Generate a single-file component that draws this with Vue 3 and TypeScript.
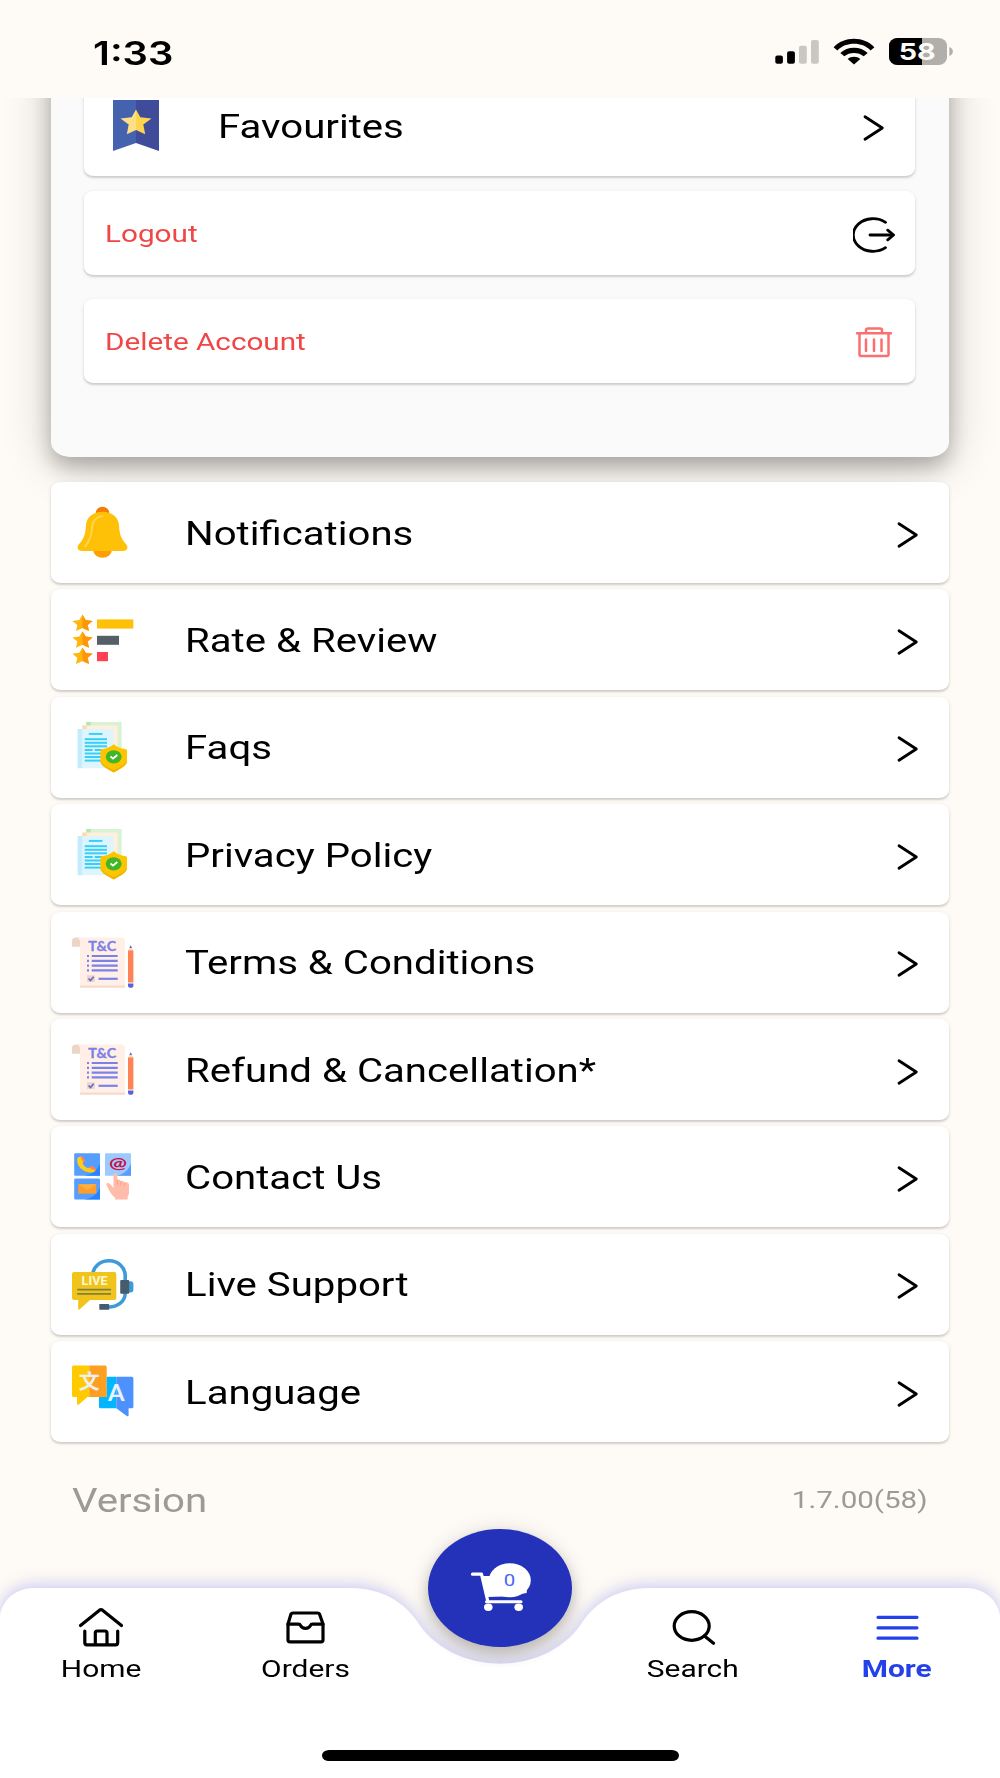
<script setup lang="ts">
type IconName = 'bell' | 'rate' | 'docs' | 'terms' | 'contact' | 'live' | 'language'

interface MenuItem {
  label: string
  icon: IconName
}

const menu: MenuItem[] = [
  { label: 'Notifications', icon: 'bell' },
  { label: 'Rate & Review', icon: 'rate' },
  { label: 'Faqs', icon: 'docs' },
  { label: 'Privacy Policy', icon: 'docs' },
  { label: 'Terms & Conditions', icon: 'terms' },
  { label: 'Refund & Cancellation*', icon: 'terms' },
  { label: 'Contact Us', icon: 'contact' },
  { label: 'Live Support', icon: 'live' },
  { label: 'Language', icon: 'language' },
]

const starOffsets: number[] = [0.6, 17.2, 33.4]
const docLines: number[] = [17.2, 20.8, 24.3, 31.5, 35, 38.6]
const termLines: number[] = [19, 23.8, 28.6, 33.4]
</script>

<template>
  <div class="screen">
    <header class="status">
      <span class="wide time">1:33</span>
      <div class="indicators">
        <svg width="45" height="25" viewBox="0 0 45 25">
          <rect x="0.3" y="15.6" width="7.6" height="8.2" rx="2" fill="#000" />
          <rect x="12.1" y="11.2" width="7.8" height="12.6" rx="2" fill="#000" />
          <rect x="24" y="5.8" width="7.8" height="18" rx="2" fill="#c9c7c3" />
          <rect x="36" y="0" width="7.8" height="23.8" rx="2" fill="#c9c7c3" />
        </svg>
        <svg class="wifi" width="42" height="27" viewBox="0 0 42 27">
          <path d="M0.6 9.2C6 3.600 13 0.700 21 0.700C29 0.700 36 3.600 41.400 9.200L37.600 12.400C33 7.900 27.500 5.800 21 5.800C14.500 5.800 9 7.900 4.400 12.400Z" fill="#000" />
          <path d="M7.300 15C11.100 11.500 15.700 9.700 21 9.700C26.300 9.700 30.900 11.500 34.700 15L30.700 18.300C28 16.100 24.900 14.900 21 14.900C17.100 14.900 14 16.100 11.300 18.300Z" fill="#000" />
          <path d="M14.700 21C16.500 19.500 18.500 18.800 21 18.800C23.500 18.800 25.500 19.500 27.300 21L21 26.400Z" fill="#000" />
        </svg>
        <svg class="battery" width="65" height="27" viewBox="0 0 65 27">
          <defs>
            <clipPath id="battery-shell"><rect x="0" y="0" width="58" height="27" rx="8.500" ry="7.500" /></clipPath>
          </defs>
          <g clip-path="url(#battery-shell)">
            <rect width="58" height="27" fill="#b1afac" />
            <rect width="33" height="27" fill="#000" />
          </g>
          <path d="M60.300 9C65 10 65 17 60.300 18Z" fill="#b1afac" />
          <text x="28.200" y="22" text-anchor="middle" font-size="23.500" font-weight="700" textLength="37" lengthAdjust="spacingAndGlyphs" fill="#fefaf5" class="digits">58</text>
        </svg>
      </div>
    </header>

    <main class="content">
      <section class="account">
        <div class="card favourites">
          <svg class="bookmark" width="46" height="51" viewBox="0 0 46 51">
            <path d="M0 0H23V43L0 51Z" fill="#4562ae" />
            <path d="M23 0H46V51L23 43Z" fill="#3e4c99" />
            <path d="M23 9.500L27.300 17.200L38.500 18.500L30.300 24.500L32.200 34.300L23 30Z" fill="#ffd44f" />
            <path d="M23 9.500L18.700 17.200L7.500 18.500L15.700 24.500L13.800 34.300L23 30Z" fill="#fde083" />
          </svg>
          <span class="wide label">Favourites</span>
          <svg class="chevron" width="22" height="28" viewBox="0 0 22 28"><path d="M2 2.800L19.300 14L2 25.200" /></svg>
        </div>
        <div class="card action">
          <span class="wide danger">Logout</span>
          <svg class="logout" width="42" height="36" viewBox="0 0 42 36">
            <path d="M32.500 5.300A19.800 16.300 0 1 0 32.500 30.700" />
            <path d="M17 18H39" />
            <path d="M34.700 13.200L40.600 18L34.700 22.800" />
          </svg>
        </div>
        <div class="card action">
          <span class="wide danger">Delete Account</span>
          <svg class="trash" width="36" height="31" viewBox="0 0 36 31">
            <path d="M1 6.300H35" />
            <path d="M10 6V3Q10 1.500 12 1.500H24Q26 1.500 26 3V6" />
            <path d="M3.500 6.500V27.500Q3.500 29 5.200 29H30.800Q32.500 29 32.500 27.500V6.500" />
            <path d="M10 12.500V24M18 12.500V24M25.500 12.500V24" />
          </svg>
        </div>
      </section>

      <nav class="menu">
        <div v-for="item in menu" :key="item.label" class="card row">
          <svg class="icon" width="62" height="51" viewBox="0 0 62 51">
            <g v-if="item.icon === 'bell'">
              <ellipse cx="30.500" cy="6" rx="6.700" ry="6.300" fill="#f57c00" />
              <ellipse cx="30.500" cy="43" rx="9.300" ry="7.800" fill="#ffa000" />
              <path d="M30.500 4.700C40 4.700 46.500 10.500 47 18C47.500 27 49 31.500 53.500 36.500C57.500 41 54.500 44 51 44H10C6.500 44 3.500 41 7.500 36.500C12 31.500 13.500 27 14 18C14.500 10.500 21 4.700 30.500 4.700Z" fill="#ffc107" />
              <path d="M30.500 9C23 10 20.500 14 20 21C19.600 29 17.500 34 13 39.500" fill="none" stroke="#ffd54f" stroke-width="2" stroke-linecap="round" />
            </g>

            <g v-else-if="item.icon === 'rate'">
              <g v-for="y in starOffsets" :key="y" :transform="`translate(0 ${y})`">
                <path d="M10.500 0L13.700 5.300L20.600 6.300L15.700 10.300L17 16.500L10.500 13.500L4 16.500L5.300 10.300L0.400 6.300L7.300 5.300Z" fill="#ffb60e" />
                <path d="M10.500 0L13.700 5.300L20.600 6.300L15.700 10.300L17 16.500L10.500 13.500Z" fill="#ff950b" />
              </g>
              <rect x="25" y="5.400" width="36.300" height="9.200" fill="#ffc107" />
              <rect x="25" y="21.800" width="22" height="9" fill="#555f66" />
              <rect x="25" y="38" width="11" height="9.200" fill="#ff4155" />
            </g>

            <g v-else-if="item.icon === 'docs'">
              <rect x="14.300" y="0" width="35.400" height="40" fill="#daf2d4" />
              <rect x="14.300" y="0" width="4.500" height="4" fill="#b6e6a9" />
              <rect x="10.300" y="3.500" width="35.400" height="40" fill="#fef0dd" />
              <rect x="10.300" y="3.500" width="4.500" height="4" fill="#fbdcae" />
              <rect x="5.700" y="7" width="36" height="39.200" fill="#dff5fe" />
              <rect x="5.700" y="7" width="4.600" height="39.200" fill="#c3edfe" />
              <g stroke="#35d0f8" stroke-width="2">
                <path d="M16.800 11.900H30.500" />
                <path v-for="y in docLines" :key="y" :d="`M12.700 ${y}H35`" />
                <path d="M12.700 27.900H20.700M22.700 27.900H35" />
              </g>
              <path d="M41.700 22.200C45 25.500 50 26.700 54 27.200Q55 27.500 55 28.500V39C55 44 46 48 41.700 50.500C37.400 48 28.400 44 28.400 39V28.500Q28.400 27.500 29.400 27.200C33.400 26.700 38.400 25.500 41.700 22.200Z" fill="#fcc500" />
              <path d="M28.400 38.500V39C28.400 44 37.400 48 41.700 50.500C46 48 55 44 55 39V38.500C52 44 46 46 41.700 48C37 46 31 44 28.400 38.500Z" fill="#f0b400" />
              <ellipse cx="41.700" cy="34.800" rx="8" ry="6.600" fill="#43b528" />
              <path d="M38.500 34.500L41 36.600L45.300 33" fill="none" stroke="#fff" stroke-width="1.800" />
            </g>

            <g v-else-if="item.icon === 'terms'">
              <path d="M0 9.700V4Q0 0.400 4 0.400H8.500V9.700Z" fill="#ecd5c5" />
              <path d="M4 0.500H49Q53 0.500 53 4V50.700H8V4.500Q8 1.500 4 0.500Z" fill="#ffefe6" />
              <rect x="8" y="48.500" width="45" height="2.200" fill="#f4dccd" />
              <text x="30.300" y="13.600" text-anchor="middle" font-size="12.600" font-weight="700" textLength="28" lengthAdjust="spacingAndGlyphs" fill="#7a82e8" stroke="#7a82e8" stroke-width="0.300" class="glyph">T&amp;C</text>
              <g stroke="#7a82e8" stroke-width="2.200">
                <path v-for="y in termLines" :key="y" :d="`M15 ${y}H17M19.700 ${y}H45.700`" />
                <path d="M26.500 41.800H45.700" />
              </g>
              <rect x="15" y="38.300" width="7.800" height="6.700" fill="#ecd5c5" />
              <path d="M16.500 41.500L18.500 43.500L21.700 39.800" fill="none" stroke="#6068d8" stroke-width="1.600" />
              <path d="M58.700 8.200L61.400 14H56Z" fill="#f1d9c5" />
              <path d="M58.700 8.200L60 11H57.400Z" fill="#5b62d6" />
              <rect x="56" y="13.500" width="5.400" height="32" fill="#ff8354" />
              <path d="M56 46.500H61.400V48.500Q61.400 50.800 58.700 50.800Q56 50.800 56 48.500Z" fill="#5b62d6" />
            </g>

            <g v-else-if="item.icon === 'contact'">
              <rect x="2.200" y="2.200" width="25.800" height="22.600" rx="1" fill="#559efd" />
              <path d="M28 12C26 19 20 24 12 24.800H28Z" fill="#2584ff" />
              <path d="M5.300 7.500C4 15 10.500 21.600 20 21.600C22 21.600 23.700 20 23.700 18.500L19 15.800L16 17.200C13 16 11.500 14.500 10.500 12L12.500 10L10 5.500C8 5.300 6 6 5.300 7.500Z" fill="#ffcc17" />
              <path d="M8.300 5.600L10.300 5.400L13.500 9.500L11.500 11.500ZM17 16.800L19.500 14.800L24 17.500L23.500 19.700Z" fill="#ff7e5c" />
              <rect x="33" y="2.200" width="26" height="22.600" rx="1" fill="#9ccaff" />
              <path d="M59 12C57 19 51 24 44 24.800H59Z" fill="#559efd" />
              <text x="46" y="17.200" text-anchor="middle" font-size="16" font-weight="700" textLength="18" lengthAdjust="spacingAndGlyphs" fill="#cf0a3c" class="glyph">@</text>
              <rect x="2.200" y="27.600" width="25.800" height="20.800" rx="1" fill="#559efd" />
              <path d="M28 36C26 43 20 47.500 12 48.400H28Z" fill="#2584ff" />
              <rect x="6.300" y="33.200" width="18" height="9.400" fill="#ff9d2b" />
              <path d="M6.300 33.200L15.300 39L24.300 33.200Z" fill="#ffb03f" />
              <path d="M41.500 23.500Q43.500 20.300 45.300 23.500V29Q47.500 27.800 48.700 30Q51.300 29 52.300 31.500Q56.700 30.500 57 34V41.500Q57 43.500 55.700 45.500V48.500H43V46.500C39 44 36.500 38 34.200 33.500C34 31.500 36.500 31.500 38 33L41.500 37Z" fill="#ffbcab" />
              <path d="M45.300 28.500V34M48.900 30V34.500M52.500 31.500V35" stroke="#ff9f8c" stroke-width="1" fill="none" />
            </g>

            <g v-else-if="item.icon === 'live'">
              <path d="M20.700 15C22 7 28.500 1.800 37 1.800C46.500 1.800 53.200 8.500 53.200 17V34C53.200 42.500 46 48 36 48.300" fill="none" stroke="#3f9bd8" stroke-width="3.600" />
              <path d="M56.500 22.300H58.500Q61.400 22.500 61.400 25V31Q61.400 33.300 58.500 33.500H56.500Z" fill="#3f9bd8" />
              <rect x="48.200" y="21" width="9" height="13.800" rx="1" fill="#465c6e" />
              <rect x="27.300" y="45" width="9.800" height="5.800" rx="0.500" fill="#465c6e" />
              <path d="M2 13H42.300Q44.300 13 44.300 15V39Q44.300 41 42.300 41H18L7.500 50.500Q6.200 51 6.200 49.500V41H2Q0 41 0 39V15Q0 13 2 13Z" fill="#f1c41b" />
              <text x="22.600" y="26.200" text-anchor="middle" font-size="12.500" font-weight="700" textLength="26" lengthAdjust="spacing" fill="#fff7d8" class="narrow">LIVE</text>
              <path d="M5.200 30.700H39M5.200 34.900H39" stroke="#83803a" stroke-width="1.700" />
            </g>

            <g v-else>
              <path d="M1.500 -0.500H17.500V30.900H15.500L6.500 38.800Q5 39.300 5 37.500V30.900H1.500Q0 30.900 0 29.400V1Q0 -0.500 1.500 -0.500Z" fill="#ffcb00" />
              <path d="M17.300 -0.500H33.300Q34.700 -0.500 34.700 1V30.900H17.300Z" fill="#ff9f22" />
              <path d="M34.700 10.800H44.300V42.200H28.500Q27 42.200 27 40.700V30.900H34.700Z" fill="#00b7ff" />
              <path d="M44.300 10.800H60Q61.400 10.800 61.400 12.300V40.700Q61.400 42.200 60 42.200H56.600V49Q56.500 51 54.800 50L44.300 42.200Z" fill="#4d91ff" />
              <text x="17.200" y="22.800" text-anchor="middle" font-size="20" font-weight="700" textLength="21" lengthAdjust="spacingAndGlyphs" fill="#eceff3" class="cjk">文</text>
              <text x="44.200" y="34.600" text-anchor="middle" font-size="22" font-weight="700" textLength="16.500" lengthAdjust="spacingAndGlyphs" fill="#e9f2ff" class="glyph">A</text>
            </g>
          </svg>
          <span class="wide label">{{ item.label }}</span>
          <svg class="chevron" width="22" height="28" viewBox="0 0 22 28"><path d="M2 2.800L19.300 14L2 25.200" /></svg>
        </div>
      </nav>

      <div class="version">
        <span class="wide label">Version</span>
        <span class="wide number">1.7.00(58)</span>
      </div>
    </main>

    <footer class="tabbar">
      <svg class="backdrop" width="1000" height="191" viewBox="0 0 1000 191">
        <path d="M0 28C2 12 16 0 34 0H350C383 0 404 15 417 33A93 78 0 0 0 583 33C596 15 617 0 650 0H966C984 0 998 12 1000 28V191H0Z" fill="#fff" />
      </svg>

      <button class="fab">
        <svg width="62" height="51" viewBox="0 0 62 51">
          <path d="M3.500 11.200H12.500L18.500 37" fill="none" stroke="#fff" stroke-width="3.200" stroke-linecap="round" stroke-linejoin="round" />
          <path d="M12.500 13H58L57.700 30L36 33.500L18.500 34Z" fill="#fff" />
          <path d="M17.500 38.800H52" stroke="#fff" stroke-width="3" stroke-linecap="round" />
          <ellipse cx="19.300" cy="44.200" rx="4.300" ry="3.700" fill="#fff" />
          <ellipse cx="49.700" cy="44.200" rx="4.300" ry="3.700" fill="#fff" />
          <ellipse cx="40.800" cy="17.200" rx="21" ry="17" fill="#fff" />
          <text x="40.600" y="23.200" text-anchor="middle" font-size="17" textLength="11.500" lengthAdjust="spacingAndGlyphs" fill="#4a66f2">0</text>
        </svg>
      </button>

      <div class="tabs">
        <div class="tab">
          <svg width="52" height="42" viewBox="0 0 52 42">
            <path d="M5.500 19.500L24.500 4.200Q26 3.200 27.500 4.200L46.500 19.500" />
            <path d="M9.800 25V36.500Q9.800 38.800 12 38.800H40.500Q42.700 38.800 42.700 36.500V25" />
            <path d="M20.300 38.500V27Q20.300 25 22.300 25H30Q32 25 32 27V38.500" />
          </svg>
          <span class="wide">Home</span>
        </div>
        <div class="tab">
          <svg width="52" height="42" viewBox="0 0 52 42">
            <path d="M14 7H38.500Q40 7 40.500 8L44 18V34Q44 35.800 42 35.800H11Q9 35.800 9 34V18L12 8Q12.500 7 14 7Z" />
            <path d="M9 18.200H19.500Q21 18.200 21.500 19.500Q23 22.300 26.500 22.300Q30 22.300 31.500 19.500Q32 18.200 33.500 18.200H44" />
          </svg>
          <span class="wide">Orders</span>
        </div>
        <div class="gap"></div>
        <div class="tab">
          <svg width="52" height="42" viewBox="0 0 52 42">
            <ellipse cx="24.700" cy="20" rx="17.500" ry="14.300" />
            <path d="M37.500 30L46.500 37.300" />
          </svg>
          <span class="wide">Search</span>
        </div>
        <div class="tab active">
          <svg width="52" height="42" viewBox="0 0 52 42">
            <path d="M7 11.300H46M7 21.800H46M7 32.200H46" />
          </svg>
          <span class="wide">More</span>
        </div>
      </div>
      <div class="home-indicator"></div>
    </footer>
  </div>
</template>

<style>
body {
  background: #fefaf5;
}
</style>

<style scoped>
.screen {
  position: relative;
  display: flex;
  flex-direction: column;
  width: 1000px;
  height: 1778px;
  overflow: hidden;
  background: #fefaf5;
  color: #000;
  font-family: Roboto, "Liberation Sans", sans-serif;
}

.wide {
  display: inline-block;
  white-space: nowrap;
  transform: scaleX(1.217);
  transform-origin: left center;
}

.status {
  flex: none;
  display: flex;
  justify-content: space-between;
  height: 98px;
  box-sizing: border-box;
  padding: 38px 46px 0 93px;
}

.time {
  margin-top: 1px;
  font-family: Inter, sans-serif;
  font-weight: 600;
  font-size: 32.800px;
  line-height: 28px;
}

.indicators {
  display: flex;
}

.indicators svg:first-child {
  margin-top: 2px;
}

.wifi {
  margin-left: 13px;
}

.battery {
  margin-left: 14px;
}

.digits {
  font-family: Inter, sans-serif;
}

.glyph {
  font-family: Lato, "Open Sans", sans-serif;
}

.narrow {
  font-family: Roboto, sans-serif;
}

.cjk {
  font-family: "Noto Sans CJK SC", sans-serif;
}

.content {
  flex: 1;
  overflow: hidden;
  min-height: 0;
}

.card {
  display: flex;
  align-items: center;
  box-sizing: border-box;
  background: #fff;
  border-radius: 10px / 8px;
  box-shadow: 0 2px 2px rgba(0, 0, 0, 0.13), 0 1px 4px rgba(0, 0, 0, 0.09);
}

.account {
  display: flex;
  flex-direction: column;
  margin: -60px 51.500px 0 51px;
  height: 418.500px;
  box-sizing: border-box;
  padding: 37px 33.300px 0;
  border-radius: 19px / 15px;
  background: #fafafa;
  box-shadow: 0 10px 20px rgba(0, 0, 0, 0.24), 0 6px 50px rgba(0, 0, 0, 0.2);
}

.favourites {
  flex: none;
  height: 101px;
  padding: 0 30px 0 28.700px;
}

.favourites .label {
  margin-left: 59px;
}

.action {
  flex: none;
  height: 84px;
  margin-top: 15px;
  padding: 0 20px 0 20.500px;
  justify-content: space-between;
}

.action + .action {
  margin-top: 23.500px;
}

.danger {
  margin-top: 2px;
  color: #f04646;
  font-size: 24.400px;
  line-height: 30px;
}

.logout,
.trash,
.chevron {
  fill: none;
  stroke: #000;
  stroke-width: 2.800;
  stroke-linecap: round;
  stroke-linejoin: round;
}

.logout {
  margin-top: 4px;
}

.trash {
  margin: 4px 3px 0 0;
  stroke: #fa7070;
  stroke-width: 2.500;
}

.chevron {
  margin: 4px 0 0 auto;
}

.label {
  margin-top: 2px;
  font-size: 33px;
  line-height: 40px;
  font-feature-settings: "liga" 1;
}

.menu {
  display: flex;
  flex-direction: column;
  gap: 6.420px;
  margin: 25.500px 51px 0;
}

.row {
  height: 101px;
  padding: 0 30px 0 21px;
}

.icon {
  overflow: visible;
}

.row .label {
  margin-left: 51px;
}

.version {
  display: flex;
  justify-content: space-between;
  align-items: center;
  margin: 37px 72px 0;
  color: #9c9a97;
}

.number {
  font-size: 24.300px;
  line-height: 30px;
  transform-origin: right center;
}

.tabbar {
  flex: none;
  position: relative;
  height: 190.500px;
}

.backdrop {
  position: absolute;
  left: 0;
  top: 0;
  overflow: visible;
  filter: drop-shadow(0 -3px 8px rgba(50, 70, 230, 0.26));
}

.fab {
  position: absolute;
  left: 428px;
  top: -58.500px;
  width: 144px;
  height: 118px;
  padding: 0;
  border: 0;
  border-radius: 50%;
  background: #2332b8;
  box-shadow: 0 8px 14px rgba(0, 0, 0, 0.2), 0 2px 22px rgba(0, 0, 0, 0.12);
  display: flex;
  align-items: center;
  justify-content: center;
  font-family: inherit;
}

.tabs {
  position: relative;
  display: grid;
  grid-template-columns: 202px 206px 184px 202px 206px;
  padding-top: 18px;
  pointer-events: none;
}

.tab {
  display: flex;
  flex-direction: column;
  align-items: center;
}

.tab svg {
  fill: none;
  stroke: #000;
  stroke-width: 3.200;
  stroke-linecap: round;
  stroke-linejoin: round;
}

.tab .wide {
  margin-top: 6px;
  font-size: 24.600px;
  line-height: 30px;
  transform-origin: center;
}

.active {
  color: #2341ea;
}

.active svg {
  stroke: #2341ea;
}

.active .wide {
  font-weight: 700;
}

.home-indicator {
  position: absolute;
  left: 322px;
  bottom: 17px;
  width: 357px;
  height: 11px;
  border-radius: 7px / 5.500px;
  background: #000;
}
</style>
